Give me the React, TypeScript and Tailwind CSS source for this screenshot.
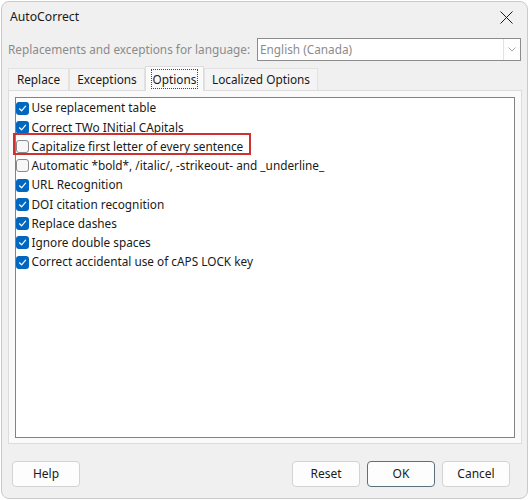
import React from "react";

const options = [
  { label: "Use replacement table", checked: true },
  { label: "Correct TWo INitial CApitals", checked: true },
  { label: "Capitalize first letter of every sentence", checked: false, highlight: true },
  { label: "Automatic *bold*, /italic/, -strikeout- and _underline_", checked: false },
  { label: "URL Recognition", checked: true },
  { label: "DOI citation recognition", checked: true },
  { label: "Replace dashes", checked: true },
  { label: "Ignore double spaces", checked: true },
  { label: "Correct accidental use of cAPS LOCK key", checked: true },
];

const tabs = ["Replace", "Exceptions", "Options", "Localized Options"];
const tabWidths = ["w-[61px]", "w-[76px]", "w-[59px]", "w-[114px]"];

function Checkbox({ checked }: { checked: boolean }) {
  if (checked) {
    return (
      <span className="flex h-[13px] w-[13px] shrink-0 items-center justify-center rounded-[3px] bg-[#0067c0]">
        <svg width="9" height="9" viewBox="0 0 9 9" fill="none">
          <path d="M1.5 4.8 L3.6 6.8 L7.6 2.2" stroke="white" strokeWidth="1.2" strokeLinecap="round" strokeLinejoin="round" />
        </svg>
      </span>
    );
  }
  return <span className="h-[13px] w-[13px] shrink-0 rounded-[3px] border border-[#8a8a8a] bg-[#f7f7f7]" />;
}

function Button({ label, primary }: { label: string; primary?: boolean }) {
  return (
    <button
      className={
        "flex h-[26px] w-[68px] items-center justify-center rounded-[4px] border bg-[#fdfdfd] text-[12px] text-[#1b1b1b] " +
        (primary ? "border-[#5b6f7d]" : "border-[#d3d3d3]")
      }
    >
      {label}
    </button>
  );
}

export default function App() {
  return (
    <div className="h-[500px] w-[530px] overflow-hidden bg-white pl-[1px] pt-[1px] font-['Noto_Sans',sans-serif]">
      <div className="flex h-[498px] w-[527px] flex-col rounded-[8px] border border-[#cacaca] bg-[#f0f0f0]">
        {/* title bar */}
        <div className="flex h-[31px] shrink-0 items-center justify-between pl-[8px] pr-[14px]">
          <span className="text-[12.2px] text-[#1a1a1a]">AutoCorrect</span>
          <svg width="13" height="13" viewBox="0 0 13 13">
            <path d="M0.5 0.5 L12.5 12.5 M12.5 0.5 L0.5 12.5" stroke="#1a1a1a" strokeWidth="1" />
          </svg>
        </div>

        {/* language row */}
        <div className="mt-[5px] flex h-[23px] shrink-0 items-center pl-[6px]">
          <span className="w-[249px] whitespace-nowrap text-[11.8px] text-[#8b8b8b]">Replacements and exceptions for language:</span>
          <div className="flex h-[23px] w-[264px] items-center border border-[#8c8c8c] bg-white">
            <span className="flex-1 pl-[2px] text-[11.8px] text-[#8b8b8b]">English (Canada)</span>
            <div className="flex h-full w-[17px] items-center justify-center border-l border-[#e3e3e3]">
              <svg width="8" height="5" viewBox="0 0 8 5">
                <path d="M0.5 0.5 L4 4 L7.5 0.5" stroke="#a8a8a8" fill="none" strokeWidth="1" />
              </svg>
            </div>
          </div>
        </div>

        {/* tabs */}
        <div className="mt-[5px] flex h-[24px] shrink-0 items-end pl-[6px]">
          {tabs.map((t, i) =>
            t === "Options" ? (
              <div
                key={t}
                className={`relative z-10 flex h-[25px] ${tabWidths[i]} -mb-[1px] items-center justify-center border border-b-0 border-[#dcdcdc] bg-[#fafafa]`}
              >
                <span className="border border-dotted border-[#444] px-[1px] text-[11.8px] leading-[18px] text-[#1a1a1a]">{t}</span>
              </div>
            ) : (
              <div
                key={t}
                className={`flex h-[22px] ${tabWidths[i]} items-center justify-center border border-b-0 border-[#e2e2e2] bg-[#f4f4f4] text-[11.8px] text-[#1a1a1a]`}
              >
                {t}
              </div>
            )
          )}
        </div>

        {/* tab page */}
        <div className="ml-[6px] h-[354px] w-[514px] shrink-0 border border-[#dcdcdc] bg-[#fafafa] pl-[6px] pt-[6px]">
          <div className="h-[341px] w-[500px] border border-[#828282] bg-white pt-[0.5px]">
            {options.map((o) => (
              <div key={o.label} className="relative flex h-[19.25px] items-center gap-[2.5px]">
                <Checkbox checked={o.checked} />
                <span className="whitespace-nowrap text-[11.8px] text-[#1a1a1a]">{o.label}</span>
                {o.highlight && (
                  <span className="pointer-events-none absolute left-[-3px] top-[-4px] h-[22px] w-[238px] border-2 border-[#d03030]" />
                )}
              </div>
            ))}
          </div>
        </div>

        {/* buttons */}
        <div className="mt-[17px] flex shrink-0 items-center pl-[10px]">
          <Button label="Help" />
          <div className="ml-[212px] flex gap-[7px]">
            <Button label="Reset" />
            <Button label="OK" primary />
            <Button label="Cancel" />
          </div>
        </div>
      </div>
    </div>
  );
}
